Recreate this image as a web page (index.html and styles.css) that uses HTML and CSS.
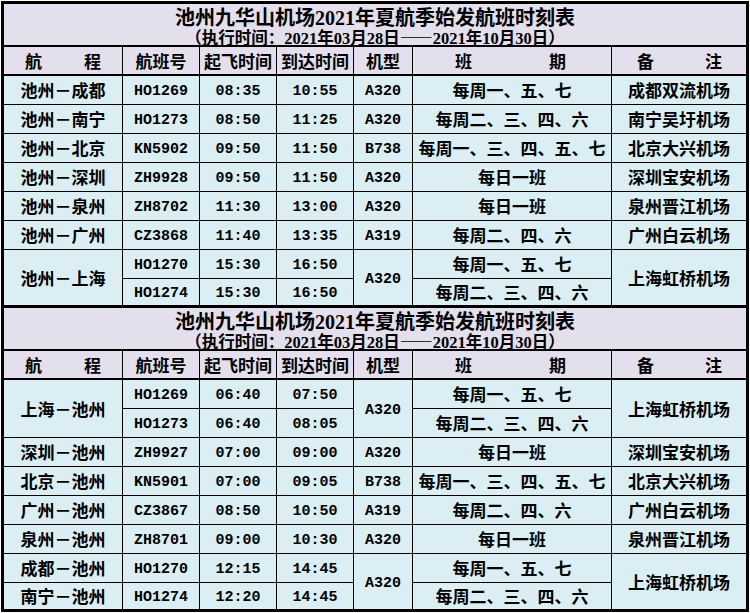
FILE: index.html
```html
<!DOCTYPE html>
<html lang="zh-CN">
<head>
<meta charset="utf-8">
<title>池州九华山机场2021年夏航季始发航班时刻表</title>
<link rel="stylesheet" href="styles.css">
</head>
<body>
<div class="sheet">
  <section class="section">
    <div class="title">
      <div class="title-main">池州九华山机场<span class="d">2021</span>年夏航季始发航班时刻表</div>
      <div class="title-sub">（执行时间：<span class="d">2021</span>年<span class="d">03</span>月<span class="d">28</span>日——<span class="d">2021</span>年<span class="d">10</span>月<span class="d">30</span>日）</div>
    </div>
    <div class="grid head">
      <div class="cell spread s1"><span>航</span><span>程</span></div>
      <div class="cell">航班号</div>
      <div class="cell">起飞时间</div>
      <div class="cell">到达时间</div>
      <div class="cell">机型</div>
      <div class="cell spread s6"><span>班</span><span>期</span></div>
      <div class="cell spread s7"><span>备</span><span>注</span></div>
    </div>
    <div class="grid body">
      <div class="cell">池州－成都</div><div class="cell num">HO1269</div><div class="cell num">08:35</div><div class="cell num">10:55</div><div class="cell num">A320</div><div class="cell">每周一、五、七</div><div class="cell">成都双流机场</div>
      <div class="cell">池州－南宁</div><div class="cell num">HO1273</div><div class="cell num">08:50</div><div class="cell num">11:25</div><div class="cell num">A320</div><div class="cell">每周二、三、四、六</div><div class="cell">南宁吴圩机场</div>
      <div class="cell">池州－北京</div><div class="cell num">KN5902</div><div class="cell num">09:50</div><div class="cell num">11:50</div><div class="cell num">B738</div><div class="cell">每周一、三、四、五、七</div><div class="cell">北京大兴机场</div>
      <div class="cell">池州－深圳</div><div class="cell num">ZH9928</div><div class="cell num">09:50</div><div class="cell num">11:50</div><div class="cell num">A320</div><div class="cell">每日一班</div><div class="cell">深圳宝安机场</div>
      <div class="cell">池州－泉州</div><div class="cell num">ZH8702</div><div class="cell num">11:30</div><div class="cell num">13:00</div><div class="cell num">A320</div><div class="cell">每日一班</div><div class="cell">泉州晋江机场</div>
      <div class="cell">池州－广州</div><div class="cell num">CZ3868</div><div class="cell num">11:40</div><div class="cell num">13:35</div><div class="cell num">A319</div><div class="cell">每周二、四、六</div><div class="cell">广州白云机场</div>
      <div class="cell span2">池州－上海</div><div class="cell num">HO1270</div><div class="cell num">15:30</div><div class="cell num">16:50</div><div class="cell num span2">A320</div><div class="cell">每周一、五、七</div><div class="cell span2">上海虹桥机场</div>
      <div class="cell num">HO1274</div><div class="cell num">15:30</div><div class="cell num">16:50</div><div class="cell">每周二、三、四、六</div>
    </div>
  </section>
  <section class="section">
    <div class="title">
      <div class="title-main">池州九华山机场<span class="d">2021</span>年夏航季始发航班时刻表</div>
      <div class="title-sub">（执行时间：<span class="d">2021</span>年<span class="d">03</span>月<span class="d">28</span>日——<span class="d">2021</span>年<span class="d">10</span>月<span class="d">30</span>日）</div>
    </div>
    <div class="grid head">
      <div class="cell spread s1"><span>航</span><span>程</span></div>
      <div class="cell">航班号</div>
      <div class="cell">起飞时间</div>
      <div class="cell">到达时间</div>
      <div class="cell">机型</div>
      <div class="cell spread s6"><span>班</span><span>期</span></div>
      <div class="cell spread s7"><span>备</span><span>注</span></div>
    </div>
    <div class="grid body">
      <div class="cell span2">上海－池州</div><div class="cell num">HO1269</div><div class="cell num">06:40</div><div class="cell num">07:50</div><div class="cell num span2">A320</div><div class="cell">每周一、五、七</div><div class="cell span2">上海虹桥机场</div>
      <div class="cell num">HO1273</div><div class="cell num">06:40</div><div class="cell num">08:05</div><div class="cell">每周二、三、四、六</div>
      <div class="cell">深圳－池州</div><div class="cell num">ZH9927</div><div class="cell num">07:00</div><div class="cell num">09:00</div><div class="cell num">A320</div><div class="cell">每日一班</div><div class="cell">深圳宝安机场</div>
      <div class="cell">北京－池州</div><div class="cell num">KN5901</div><div class="cell num">07:00</div><div class="cell num">09:05</div><div class="cell num">B738</div><div class="cell">每周一、三、四、五、七</div><div class="cell">北京大兴机场</div>
      <div class="cell">广州－池州</div><div class="cell num">CZ3867</div><div class="cell num">08:50</div><div class="cell num">10:50</div><div class="cell num">A319</div><div class="cell">每周二、四、六</div><div class="cell">广州白云机场</div>
      <div class="cell">泉州－池州</div><div class="cell num">ZH8701</div><div class="cell num">09:00</div><div class="cell num">10:30</div><div class="cell num">A320</div><div class="cell">每日一班</div><div class="cell">泉州晋江机场</div>
      <div class="cell">成都－池州</div><div class="cell num">HO1270</div><div class="cell num">12:15</div><div class="cell num">14:45</div><div class="cell num span2">A320</div><div class="cell">每周一、五、七</div><div class="cell span2">上海虹桥机场</div>
      <div class="cell">南宁－池州</div><div class="cell num">HO1274</div><div class="cell num">12:20</div><div class="cell num">14:45</div><div class="cell">每周二、三、四、六</div>
    </div>
  </section>
</div>
</body>
</html>
```

FILE: styles.css
```css
html, body {
  margin: 0;
  padding: 0;
  background: #ffffff;
}

body {
  font-family: "Noto Sans CJK SC", sans-serif;
  color: #000000;
}

.sheet {
  width: 748px;
  box-sizing: border-box;
  margin: 1px 0 0 1px;
  padding: 3px;
  background: #000000;
}

.section + .section {
  margin-top: 3px;
}

.title {
  height: 41px;
  box-sizing: border-box;
  padding-top: 1px;
  background: #e4dfec;
  display: flex;
  flex-direction: column;
  align-items: center;
  margin-bottom: 2px;
}

.title-main {
  font-size: 20px;
  font-weight: bold;
  line-height: 24px;
  height: 24px;
  white-space: nowrap;
}

.title-sub {
  font-size: 16.5px;
  font-weight: bold;
  line-height: 16px;
  height: 16px;
  white-space: nowrap;
  text-decoration: underline;
  text-underline-offset: 1px;
}

.d {
  font-family: "Liberation Serif", serif;
}

.grid {
  display: grid;
  grid-template-columns: 118px 76px 76px 76px 58px 198px 134px;
  column-gap: 1px;
  row-gap: 1px;
}

.head {
  grid-template-rows: 27px;
  margin-bottom: 2px;
}

.body {
  grid-template-rows: repeat(7, 28px) 26px;
}

.cell {
  background: #daeef3;
  display: flex;
  align-items: center;
  justify-content: center;
  font-size: 17px;
  font-weight: bold;
  white-space: nowrap;
  line-height: 20px;
}

.head .cell {
  background: #e4dfec;
}

.spread {
  justify-content: space-between;
}

.s1 {
  padding: 0 21px;
}

.s6 {
  padding: 0 45px 0 42px;
}

.s7 {
  padding: 0 24px 0 25px;
}

.span2 {
  grid-row: span 2;
}

.num {
  font-family: "Liberation Mono", monospace;
  font-size: 15px;
  padding-top: 4px;
  box-sizing: border-box;
}
```
